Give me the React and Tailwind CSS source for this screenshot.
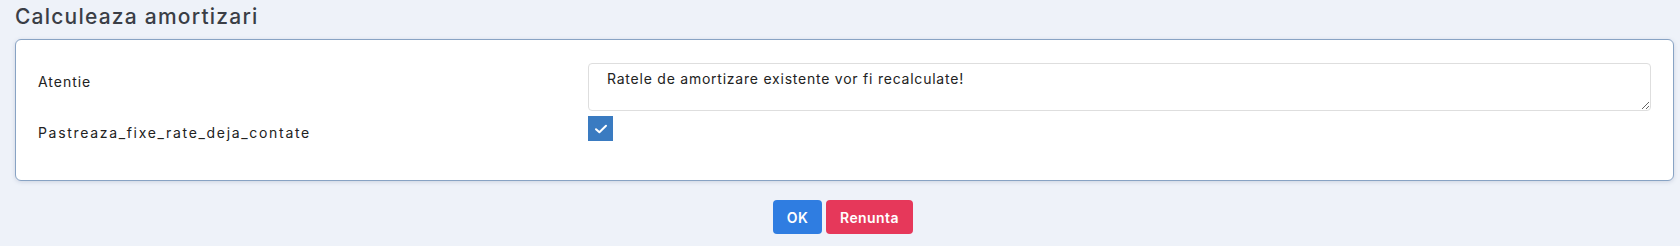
import React from "react";

export default function App() {
  return (
    <div
      className="w-[1680px] h-[246px] bg-[#eef2f9] text-[#222] overflow-hidden"
      style={{ fontFamily: "Inter, 'Open Sans', sans-serif" }}
    >
      <div className="pl-[15px] pt-[3px] h-[39px] text-[21px] leading-[28px] font-medium text-[#3a3e46] tracking-[0.058em]">
        Calculeaza amortizari
      </div>
      <div className="ml-[15px] mr-[6px] h-[142px] bg-white border border-[#88a3c4] rounded-[6px] shadow-[0_1px_4px_rgba(60,80,120,0.18)] px-[22px] pt-[23px]">
        <div className="grid grid-cols-[550px_1fr]">
          <div className="pt-[9px] text-[14px] leading-[20px] tracking-[0.07em]">Atentie</div>
          <textarea
            readOnly
            defaultValue="Ratele de amortizare existente vor fi recalculate!"
            className="h-[48px] w-full border border-[#dedede] rounded-[4px] pl-[18px] pt-[5px] text-[14px] leading-[20px] text-[#222] tracking-[0.055em] outline-none resize-y"
            style={{ fontFamily: "Inter, 'Open Sans', sans-serif" }}
          />
          <div className="pt-[12px] text-[14px] leading-[20px] tracking-[0.12em]">Pastreaza_fixe_rate_deja_contate</div>
          <div className="pt-[5px]">
            <div className="w-[25px] h-[25px] bg-[#3a7bc1] flex items-center justify-center">
              <svg width="16" height="16" viewBox="0 0 16 16" fill="none">
                <path d="M3 8.2 L6.4 11.3 L13 4.8" stroke="white" strokeWidth="2" strokeLinecap="round" strokeLinejoin="round" />
              </svg>
            </div>
          </div>
        </div>
      </div>
      <div className="flex justify-center gap-[4px] pt-[19px] pl-[6px]">
        <button className="w-[49px] h-[34px] rounded-[4px] bg-[#2f7de1] text-white text-[14px] font-semibold tracking-[0.03em]">OK</button>
        <button className="w-[87px] h-[34px] rounded-[4px] bg-[#e6385a] text-white text-[14px] font-semibold tracking-[0.03em]">Renunta</button>
      </div>
    </div>
  );
}
